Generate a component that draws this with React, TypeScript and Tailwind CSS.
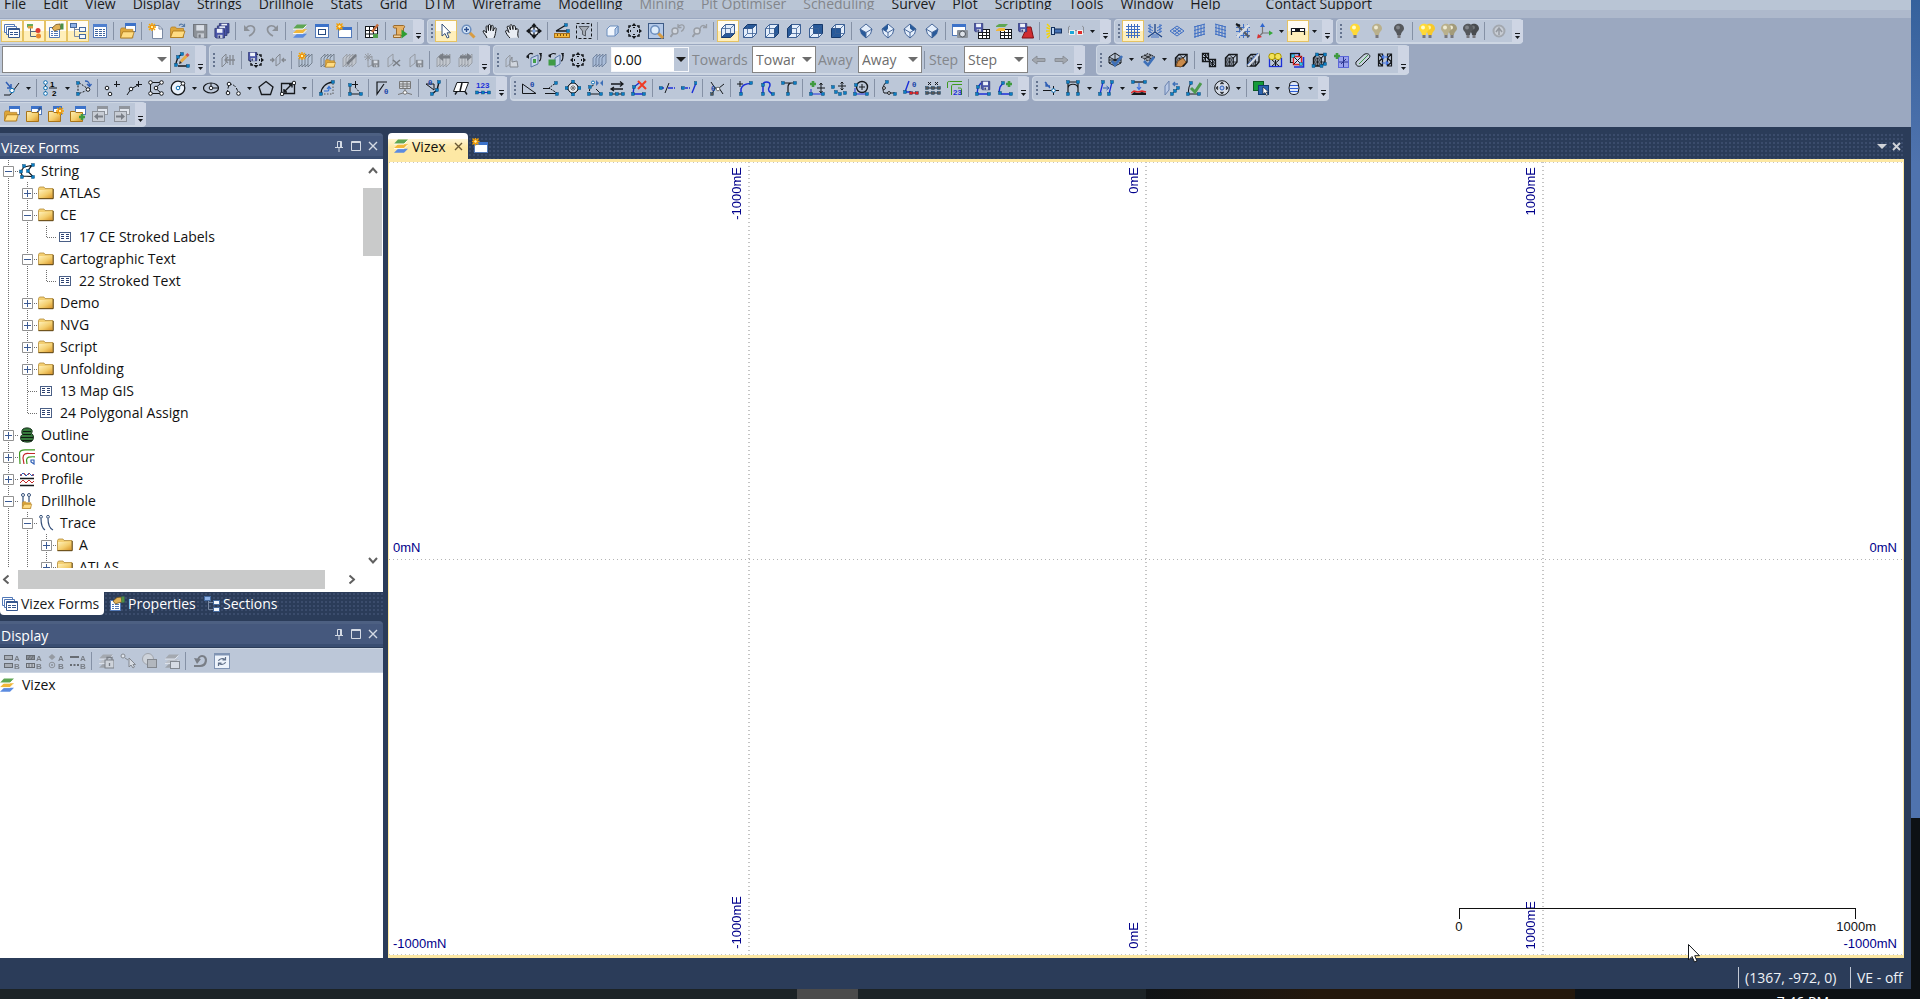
import React from 'react';
import clsx from 'clsx';

type PathProps = { d: string; c?: string; w?: number; f?: string; dash?: string };

const P = ({ d, c = '#15181c', w = 1, f = 'none', dash }: PathProps) => (
  <path d={d} stroke={c} strokeWidth={w} fill={f} strokeDasharray={dash} />
);

const F = ({ d, f = '#15181c' }: { d: string; f?: string }) => <path d={d} fill={f} />;

// small square string nodes, given as "x,y x,y" centres
const N = ({ p, f = '#0b7fc4' }: { p: string; f?: string }) => (
  <>
    {p.split(' ').map((pt) => {
      const [x, y] = pt.split(',').map(Number);
      return <rect key={pt} x={x - 1.5} y={y - 1.5} width="3" height="3" fill={f} stroke="#0b3f66" strokeWidth="0.4" />;
    })}
  </>
);

const Ring = ({ x, y, r = 1.8, c = '#15181c', f = '#fff' }: { x: number; y: number; r?: number; c?: string; f?: string }) => (
  <circle cx={x} cy={y} r={r} stroke={c} fill={f} />
);

const Sun = ({ x = 4, y = 4 }: { x?: number; y?: number }) => (
  <g transform={`translate(${x} ${y})`}>
    <P d="M0 -4V4M-4 0H4M-3 -3L3 3M3 -3L-3 3" c="#f5a300" w={1.4} />
    <circle r="1.8" fill="#fff3a0" stroke="#f08a00" />
  </g>
);

const Disk = ({ x = 0, y = 0, s = 1, c = '#4a55a8' }: { x?: number; y?: number; s?: number; c?: string }) => (
  <g transform={`translate(${x} ${y}) scale(${s})`}>
    <path d="M0.5 0.5H12.5V12.5H2L0.5 11Z" fill={c} stroke="#2c3570" />
    <rect x="3" y="1" width="7" height="5" fill="#eef2fb" />
    <rect x="4" y="8.5" width="6" height="4" fill="#c9cfdd" />
    <rect x="5" y="9.5" width="2" height="3" fill="#2c3570" />
  </g>
);

const Folder = ({ x = 0, y = 0, s = 1 }: { x?: number; y?: number; s?: number }) => (
  <g transform={`translate(${x} ${y}) scale(${s})`}>
    <path d="M0.5 2.5L1.5 1H5.5L6.5 2.5H13.5V11.5H0.5Z" fill="#dda63a" stroke="#b5812a" strokeWidth="0.8" />
    <path d="M0.5 11.5L3 5H15L12.8 11.5Z" fill="#ffdc83" stroke="#a87418" strokeWidth="0.8" />
  </g>
);

const ClosedFolder = () => (
  <path d="M0.5 5.5H5L6 6.5H12.5V15.5H0.5Z" fill="url(#folderFill)" stroke="#a87418" />
);

const Win = ({ x = 0, y = 0, w = 10, h = 9 }: { x?: number; y?: number; w?: number; h?: number }) => (
  <g>
    <rect x={x + 0.5} y={y + 0.5} width={w} height={h} fill="#fff" stroke="#5279b8" />
    <rect x={x} y={y} width={w + 1} height="3" fill="#3c72c9" />
  </g>
);

const Plus = ({ x, y, c = '#3f9a3f' }: { x: number; y: number; c?: string }) => (
  <P d={`M${x - 3} ${y}H${x + 3}M${x} ${y - 3}V${y + 3}`} c={c} w={2.6} />
);

const Pencil = () => (
  <>
    <P d="M7 9.5L13.5 3" c="#e7ab44" w={3} />
    <P d="M12.5 4L14.5 2" c="#c8525a" w={3} />
    <F d="M5 12L5.8 8.8L8 11Z" f="#3a2a18" />
  </>
);

const Layers = () => (
  <>
    <F d="M1 14.8L5 10.8H15L11 14.8Z" f="#5b8be0" />
    <F d="M1 10.3L5 6.3H15L11 10.3Z" f="#f2b73a" />
    <F d="M1 5.8L5 1.5H15L11 5.8Z" f="#5ea653" />
    <P d="M1 10.6H11L14.5 7M1 6.1H11L14.5 2.5" c="#fdfdf2" />
  </>
);

const cubeFaces = {
  bottom: 'M1.5 14.5L5.5 10.5H14.5L10.5 14.5Z',
  top: 'M1.5 5.5L5.5 1.5H14.5L10.5 5.5Z',
  right: 'M10.5 5.5L14.5 1.5V10.5L10.5 14.5Z',
  left: 'M1.5 5.5L5.5 1.5V10.5L1.5 14.5Z',
  back: 'M5.5 1.5H14.5V10.5H5.5Z',
  front: 'M1.5 5.5H10.5V14.5H1.5Z',
};

const Cube = ({ face }: { face: keyof typeof cubeFaces }) => (
  <>
    <path d="M1.5 5.5L5.5 1.5H14.5V10.5L10.5 14.5H1.5Z" fill="#e4eefb" stroke="#3b5f94" />
    <path d={cubeFaces[face]} fill="#285a9a" stroke="#16396b" />
    <P d="M1.5 5.5H10.5V14.5M10.5 5.5L14.5 1.5M1.5 14.5L5.5 10.5H14.5M5.5 10.5V1.5" c="#3b5f94" w={0.8} />
  </>
);

const Iso = ({ d }: { d: string }) => (
  <>
    <path d="M8 1L14 6L12.5 11L8 15L3.5 11L2 6Z" fill="#e4eefb" stroke="#48689a" />
    <path d={d} fill="#285a9a" />
    <P d="M2 6L8 9.5L14 6M8 9.5V15" c="#48689a" />
  </>
);

const Bulb = ({ x = 8, c, hi }: { x?: number; c: string; hi: string }) => (
  <>
    <path d={`M${x - 5} 5.5C${x - 5} -1 ${x + 5} -1 ${x + 5} 5.5C${x + 5} 8 ${x + 2} 9 ${x + 2} 12H${x - 2}C${x - 2} 9 ${x - 5} 8 ${x - 5} 5.5Z`} fill={c} />
    <circle cx={x - 1} cy="4.5" r="2" fill={hi} />
    <rect x={x - 1.5} y="12" width="3" height="3" fill="#77777c" />
  </>
);

const Fit = () => (
  <>
    <path d="M5 3H3V5M11 3H13V5M5 13H3V11M11 13H13V11" fill="none" stroke="#15181c" strokeWidth="1.5" />
    <F d="M8 0L10.5 3H5.5ZM8 16L10.5 13H5.5ZM0 8L3 5.5V10.5ZM16 8L13 5.5V10.5Z" />
    <P d="M7 4.5H9M7 11.5H9M4.5 7V9M11.5 7V9" />
  </>
);

const Slices = ({ c = '#6f7a88', f = '#b9c7d9' }: { c?: string; f?: string }) => (
  <>
    {[0, 3, 6, 9].map((x) => (
      <path key={x} d={`M${x + 1} 6L${x + 5} 2V11L${x + 1} 15Z`} fill={f} stroke={c} strokeWidth="0.9" />
    ))}
  </>
);

const Mesh = ({ c = '#15181c', f = 'none' }: { c?: string; f?: string }) => (
  <>
    <path d="M2.5 6L6 2.5H14V10L10.5 14H2.5Z" fill={f} stroke={c} strokeWidth="1.4" />
    <P d="M2.5 6H10.5V14M10.5 6L14 2.5M2.5 10L6.5 6L10.5 10L6.5 14ZM2.5 6L10.5 14M10.5 6L2.5 14M6.5 6V14M2.5 10H14M6 2.5L10 6L13 3" c={c} w={0.8} />
  </>
);

const Hatch = ({ d }: { d: string }) => <P d={d} c="#3f6fc4" w={1} />;

const Theta = ({ x, y }: { x: number; y: number }) => (
  <text x={x} y={y} fontSize="8" fontWeight="bold" fill="#2046a8" fontFamily="Liberation Sans">θ</text>
);

const AB = () => (
  <g fontSize="8" fontWeight="bold" fill="#3f444c" fontFamily="Liberation Sans">
    <text x="10" y="7.5">A</text>
    <text x="10" y="15.5">B</text>
  </g>
);

const Magnifier = ({ x = 0, y = 0 }: { x?: number; y?: number }) => (
  <g transform={`translate(${x} ${y})`}>
    <P d="M8.5 8.5L13.5 13.5" c="#d89c42" w={3} />
    <circle cx="5.5" cy="5.5" r="4.3" fill="#dcebfb" stroke="#6e8fbe" strokeWidth="1.6" />
  </g>
);

const icons: Record<string, React.ReactNode> = {
  forms: (
    <>
      <path d="M0.5 1.5H10.5V9.5H0.5Z" fill="#fff" stroke="#5279b8" />
      <path d="M2.5 3.5H12.5V11.5H2.5Z" fill="#fff" stroke="#5279b8" />
      <path d="M4.5 5.5H15.5V14.5H4.5Z" fill="#fff" stroke="#35578f" />
      <P d="M5 6.5H15M6 9.5H9M10 9.5H14M6 11.5H9M10 11.5H14" c="#35578f" />
    </>
  ),
  tree: (
    <>
      <P d="M4.5 5V13.5H10M4.5 8.5H10" c="#56667e" />
      <rect x="1" y="1" width="6" height="3.5" fill="#67a95a" />
      <rect x="2" y="3" width="5" height="2.5" fill="#dba13a" />
      <circle cx="12" cy="7.5" r="2.5" fill="#dd3b32" />
      <circle cx="12.5" cy="13" r="2.5" fill="#e9862b" />
    </>
  ),
  props: (
    <>
      <path d="M1.5 4.5H11.5V14.5H1.5Z" fill="#fff" stroke="#5279b8" />
      <P d="M3 8.5H5M6 8.5H10M3 10.5H5M6 10.5H10M3 12.5H5M6 12.5H10" c="#5279b8" />
      <path d="M4 5L8 1.5L12 1L13 6L9 7L6.5 8Z" fill="#e2b157" stroke="#6b5220" strokeWidth="0.8" />
      <rect x="12.5" y="0.5" width="3" height="6" fill="#4d8f46" />
    </>
  ),
  sections: (
    <>
      <P d="M4.5 4.5V13.5H9M4.5 6.5H9" c="#7b8aa3" />
      <rect x="0.5" y="0.5" width="6" height="4" fill="#8fb2e6" stroke="#456a9f" />
      <rect x="9.5" y="4.5" width="6" height="4" fill="#f3f7fd" stroke="#456a9f" />
      <rect x="9.5" y="11.5" width="6" height="4" fill="#f3f7fd" stroke="#456a9f" />
    </>
  ),
  table: (
    <>
      <rect x="1.5" y="1.5" width="13" height="13" fill="#fff" stroke="#5279b8" />
      <rect x="1" y="1" width="14" height="3" fill="#4f7fce" />
      <P d="M3 6.5H6M7 6.5H10M11 6.5H13M3 8.5H6M7 8.5H10M11 8.5H13M3 10.5H6M7 10.5H10M11 10.5H13M3 12.5H6M7 12.5H10M11 12.5H13" c="#40669e" />
    </>
  ),
  project: (<><Win x={5} y={0} w={10} h={8} /><Folder y={4} s={0.95} /></>),
  newFile: (<><path d="M4.5 2.5H11L14.5 6V15.5H4.5Z" fill="#fff" stroke="#7b8aa3" /><P d="M11 2.5V6H14.5" c="#7b8aa3" /><Sun /></>),
  open: (<><Folder y={3} /><P d="M9 2.5C11 0.5 13 1 14 3M14.5 0.8V3.5H11.5" c="#587ba8" w={1.2} /></>),
  save: <Disk x={1} y={1} s={1.1} c="#5f6670" />,
  saveAll: (<><Disk x={5} y={0} s={0.8} /><Disk x={3} y={2.5} s={0.8} /><Disk x={0.5} y={5} s={0.8} /></>),
  undo: (<><P d="M4 5C8 1 13 3 12.5 7C12 10 9 12 7 13" c="#60656e" w={1.6} /><F d="M2 2V8H8Z" f="#60656e" /></>),
  redo: (<><P d="M12 5C8 1 3 3 3.5 7C4 10 7 12 9 13" c="#60656e" w={1.6} /><F d="M14 2V8H8Z" f="#60656e" /></>),
  layers: <Layers />,
  window: (<><Win x={1} y={1} w={13} h={13} /><rect x="4.5" y="6.5" width="7" height="5" fill="#fff" stroke="#274a80" /></>),
  newWindow: (<><Win x={2} y={4} w={13} h={10} /><Sun x={3.5} y={3.5} /></>),
  editGrid: (
    <>
      <rect x="1.5" y="3.5" width="12" height="11" fill="#fff" stroke="#15181c" />
      <P d="M1.5 7.5H13.5M1.5 11H13.5M5.5 3.5V14.5M9.5 3.5V14.5" />
      <rect x="9" y="11" width="5" height="4" fill="#4fa04c" />
      <P d="M8 9L14 1.5" c="#c06a3a" w={2.4} />
    </>
  ),
  script: (
    <>
      <path d="M2 2.5H11.5C13 2.5 13 5 11.5 5V12.5H4.5V5H2C1 5 1 2.5 2 2.5Z" fill="#e7b266" stroke="#9b6a2c" />
      <path d="M1.5 12H9V14.5H1.5Z" fill="#f5d39d" stroke="#9b6a2c" />
      <F d="M9.5 6.5L15.5 11L9.5 15.5Z" f="#2e9e33" />
    </>
  ),
  cursor: <path d="M4 1V13L7 10.5L9.2 15L11 14.2L9 9.8H12.5Z" fill="#fff" stroke="#35507a" />,
  zoomIn: (<><Magnifier x={1} y={1} /><P d="M4 6.5H9M6.5 4V9" c="#2c4f8e" w={1.4} /></>),
  hand: (
    <path d="M5 15C4 12 1 10 1 8C2.5 7 3.5 8.5 4.5 10L4 3.5C5 2.5 6 3 6 4L6.5 7.5V2C7.5 1 8.5 1.5 8.5 2.5V7.5L9.5 2.5C10.5 2 11.3 2.5 11.2 3.5L11 8L12.5 5C13.5 4.5 14.5 5 14.2 6C13.5 9 13.5 12 12 15" fill="#e9edf4" stroke="#15181c" />
  ),
  grab: (
    <path d="M6 15C4 13 2 10.5 1.5 8C2.5 6.5 4 8 5 9.5L3 4C3.5 2.5 5 3 5.5 4.5L6.5 7L6 2.5C6.5 1 8 1.5 8.3 3L9 6.5V3C10 1.8 11 2.5 11.3 4L11.8 7L12.5 5.5C14 5.5 14.5 7 14 9C13.5 11.5 13.8 13 14.5 14.5" fill="#e9edf4" stroke="#15181c" />
  ),
  target: (
    <>
      <circle cx="8" cy="8" r="4.5" fill="#e9edf4" stroke="#15181c" strokeWidth="1.5" />
      <P d="M8 2V14M2 8H14" w={1.2} />
      <F d="M8 0L10.5 3H5.5ZM8 16L10.5 13H5.5ZM0 8L3 5.5V10.5ZM16 8L13 5.5V10.5Z" />
      <rect x="6.5" y="6.5" width="3" height="3" fill="#7fa5e0" />
    </>
  ),
  measure: (<><P d="M2 8L12 2M2 8H14" w={1.4} /><N p="12,2 14,8" /><rect x="0.5" y="10.5" width="15" height="4" fill="#f5b93a" stroke="#a8701a" /><P d="M3.5 11V13M6.5 11V13M9.5 11V13M12.5 11V13" c="#7d5210" /></>),
  filter: (<><P d="M0.5 0.5H15.5V15.5H0.5Z" dash="3 2" /><path d="M3 3.5H13L9.5 8V13L6.5 11.5V8Z" fill="#a6adb7" stroke="#555b64" /></>),
  cube: (<><path d="M3 6L6 3H14V10L11 13H3Z" fill="#f1f6fd" stroke="#6b8dbd" /><path d="M11 6L14 3V10L11 13Z" fill="#b6cdec" stroke="#6b8dbd" /></>),
  fit: <Fit />,
  zoomBox: (<><rect x="0.5" y="0.5" width="15" height="15" fill="#b4c9e8" stroke="#3e5b86" /><Magnifier x={1.5} y={1.5} /></>),
  zoomPrev: (<><circle cx="5" cy="8" r="3" fill="#dfe3ea" stroke="#777c84" strokeWidth="1.4" /><P d="M3 10.5L0.5 14" c="#777c84" w={2} /><P d="M8 4C10 0.5 15 1.5 14 5C13.5 7 12 8 11 8.5M8 1V4.5H11.5" c="#777c84" w={1.3} /></>),
  zoomNext: (<><circle cx="5" cy="8" r="3" fill="#dfe3ea" stroke="#777c84" strokeWidth="1.4" /><P d="M3 10.5L0.5 14" c="#777c84" w={2} /><P d="M8 8C7.5 3 11 1 14 4M14.5 1V4.5H11" c="#777c84" w={1.3} /></>),
  viewBottom: <Cube face="bottom" />,
  viewTop: <Cube face="top" />,
  viewRight: <Cube face="right" />,
  viewLeft: <Cube face="left" />,
  viewBack: <Cube face="back" />,
  viewFront: <Cube face="front" />,
  isoSW: <Iso d="M2 6L8 9.5V15L3.5 11Z" />,
  isoNW: <Iso d="M2 6L8 1V5.5L6 8.5Z" />,
  isoNE: <Iso d="M8 1L14 6L11 8L8 5.5Z" />,
  isoSE: <Iso d="M14 6L8 9.5V15L12.5 11Z" />,
  snapshot: (<><Win x={0} y={1} w={13} h={11} /><rect x="5" y="7" width="11" height="8" rx="1" fill="#8d949d" /><circle cx="10.5" cy="11" r="3" fill="#dde2e9" stroke="#4f555d" /></>),
  saveGrid: (<><rect x="4.5" y="6.5" width="11" height="9" fill="#fff" stroke="#15181c" /><P d="M4.5 9.5H15.5M4.5 12.5H15.5M8.5 6.5V15.5M12.5 6.5V15.5" /><Disk s={0.7} /></>),
  layerGrid: (<><rect x="4.5" y="6.5" width="11" height="9" fill="#fff" stroke="#15181c" /><P d="M4.5 9.5H15.5M4.5 12.5H15.5M8.5 6.5V15.5M12.5 6.5V15.5" /><F d="M0 3L3 1H12L9 4H0Z" f="#5ea653" /><F d="M0 7L3 5H9V8H0Z" f="#f2b73a" /></>),
  saveSolid: (<><path d="M4 15L9 4L13 4L15.5 15Z" fill="#d02c30" stroke="#7d1216" /><Disk s={0.7} /></>),
  torch: (<><rect x="5.5" y="4.5" width="3" height="7" fill="#b9d3f3" stroke="#14315f" /><rect x="8.5" y="6" width="7" height="4" fill="#4471b5" stroke="#14315f" /><P d="M4 4L1 1M4 8H0M4 12L1 15M4 6L0.5 4.5M4 10L0.5 11.5" c="#f5d400" w={1.4} /></>),
  glasses: (<><P d="M0.5 10V4L2 3M15.5 10V4L14 3M0 7.5H16" c="#8c9097" /><rect x="1.5" y="7.5" width="5" height="4" fill="#19a7d8" stroke="#eee" /><rect x="9.5" y="7.5" width="5" height="4" fill="#e02a2a" stroke="#eee" /></>),
  grid: <Hatch d="M1 3.5H15M1 6.5H15M1 9.5H15M1 12.5H15M3.5 1V15M6.5 1V15M9.5 1V15M12.5 1V15" />,
  grid3d: (<><P d="M8 1V9L1 14M8 9L15 14" c="#1d4384" w={1.3} /><Hatch d="M1 2L6 5M1 5L6 8M1 8L5 10M15 2L10 5M15 5L10 8M15 8L11 10M3 1V10M13 1V10M5 12H11M4 14H12" /></>),
  gridFlat: <Hatch d="M8 3L15 8L8 13L1 8ZM5.7 4.7L12.7 9.7M3.3 6.3L10.3 11.3M10.3 4.7L3.3 9.7M12.7 6.3L5.7 11.3" />,
  gridLeft: <Hatch d="M3 4L14 1M3 7.5L14 4.5M3 11L14 8M3 14L14 11M4 3V15M7 2V14M10 2V13M13 1V12" />,
  gridRight: <Hatch d="M2 1L13 4M2 4.5L13 7.5M2 8L13 11M2 11L13 14M3 1V12M6 2V13M9 2V14M12 3V15" />,
  gridTools: (<><Hatch d="M1 4.5H15M1 8.5H15M1 12.5H15M4.5 1V15M8.5 1V15M12.5 1V15" /><P d="M2 2L14 14" c="#555b64" w={2.2} /><P d="M14 2L2 14" c="#d8dde5" w={2.6} /><P d="M1 1L5 3" c="#15181c" w={2} /></>),
  axes: (<><P d="M5.5 10V2M5.5 10H14M5.5 10L1.5 14" c="#777" w={1.2} /><F d="M5.5 0L8 4H3Z" f="#2f66d0" /><F d="M16 10L12 7.5V12.5Z" f="#35a83a" /><F d="M0 15.5L1 11L5 14Z" f="#d83030" /></>),
  scale: (<><P d="M1.5 5V12M14.5 5V12" w={1.2} /><path d="M1.5 5.5H14.5V8.5H1.5Z" fill="#fff" stroke="#15181c" /><rect x="5" y="5" width="5" height="4" fill="#15181c" /></>),
  bulb: <Bulb c="#ffd936" hi="#fffbc4" />,
  bulbDim: <Bulb c="#b9b08c" hi="#eeead2" />,
  bulbOff: <Bulb c="#55585c" hi="#808388" />,
  bulbs: (<><Bulb x={11} c="#f7c92c" hi="#fff3a0" /><Bulb x={5} c="#ffd936" hi="#fffbc4" /></>),
  bulbsDim: (<><Bulb x={11} c="#a39b7a" hi="#eeead2" /><Bulb x={5} c="#b9b08c" hi="#eeead2" /></>),
  bulbsOff: (<><Bulb x={11} c="#484b4f" hi="#707377" /><Bulb x={5} c="#55585c" hi="#808388" /></>),
  reload: (<><circle cx="8" cy="8" r="5.5" fill="#cfd5de" stroke="#8a9099" strokeWidth="2" /><P d="M5 9L8 5L11 9M8 5V12" c="#6f757e" w={1.5} /></>),

  editString: (<><P d="M4 14H14M2 11L4 5L8 2M2 11V14" w={1.3} /><N p="2,13 14,14 4,5 8,2" /><Pencil /></>),
  planeLeft: (<><path d="M2 6L6 2V11L2 15Z" fill="none" stroke="#555" /><P d="M15 8H5M8 5L5 8L8 11M10 3V13M13 3V13" c="#555" w={1.3} /></>),
  fitSave: (<><Fit /><Disk s={0.7} /></>),
  planePair: (<><path d="M6 6L10 2V11L6 14Z" fill="none" stroke="#555" /><P d="M0 8H4M16 8H12M2 6L4 8L2 10M14 6L12 8L14 10" c="#555" w={1.3} /></>),
  slicesNew: (<><Slices /><Sun /></>),
  slicesOpen: (<><Slices /><Folder x={5} y={7} s={0.7} /></>),
  slicesEdit: (<><Slices /><P d="M5 12L14 3" c="#444" w={2.5} /></>),
  slicesSun: (<><P d="M4 1V9M0 5H8M1 2L7 8M7 2L1 8" c="#777" /><path d="M4 6L8 4V13L4 15Z" fill="none" stroke="#777" /><Disk x={8} y={8} s={0.55} c="#555" /></>),
  slicesDel: (<><path d="M2 6L7 2V11L2 15Z" fill="none" stroke="#777" /><P d="M7 8L14 14M14 8L7 14" c="#444" w={1.6} /></>),
  slicesDisk: (<><path d="M2 6L7 2V11L2 15Z" fill="none" stroke="#777" /><Disk x={8} y={8} s={0.55} c="#555" /></>),
  slicesPrev: (<><Slices c="#777" f="#c3cad4" /><F d="M2 5L7 1V3.5H14V6.5H7V9Z" f="#444" /></>),
  slicesNext: (<><Slices c="#777" f="#c3cad4" /><F d="M14 5L9 1V3.5H2V6.5H9V9Z" f="#444" /></>),
  pick: (<><path d="M2 7L6 3V12L2 15Z" fill="none" stroke="#777" /><path d="M6 15V9L8 5V10L13 9L14 15Z" fill="#dfe3ea" stroke="#555" /></>),
  rotPlane: (<><path d="M5 6L12 3V12L5 15Z" fill="#c5d4ec" stroke="#5a76a5" /><rect x="7" y="7" width="3" height="4" fill="#43a047" /><P d="M1 6C2 1 5 1 7 2M15 3C15 8 14 9 13 9" w={1.2} /><F d="M0 4L3 7V3ZM13 1L16 1L15 5Z" /></>),
  rotPlaneGreen: (<><path d="M7 6L12 3V12L7 15Z" fill="#c5d4ec" stroke="#5a76a5" /><rect x="0.5" y="7.5" width="7" height="6" fill="#3f9b45" /><P d="M1 5C3 1 5 1 8 2M15 3C15 8 14 9 13 9" w={1.2} /><F d="M0 3L3 6V2ZM13 1L16 1L15 5Z" /></>),
  slices: <Slices c="#6d7f9c" f="#a9bcd8" />,
  arrowLeft: <path d="M1 8L6 4V6.5H14V9.5H6V12Z" fill="#888e97" stroke="#5c626b" />,
  arrowRight: <path d="M15 8L10 4V6.5H2V9.5H10V12Z" fill="#888e97" stroke="#5c626b" />,

  wireCheck: (<><path d="M2 5L8 1L14 5V11L8 14L2 11Z" fill="none" stroke="#15181c" /><P d="M2 5L14 11M14 5L2 11M8 1V14M2 8H14" w={0.9} /><P d="M5 9L8 13L15 4" c="#3e70b8" w={2.6} /></>),
  surfCheck: (<><path d="M1 5L8 1.5L15 5L8 9Z" fill="#9aa0aa" stroke="#15181c" strokeDasharray="2 1" /><P d="M4.5 3L11.5 7M11.5 3L4.5 7" w={0.9} /><P d="M4 9L8 13L14 5" c="#3e70b8" w={2.6} /></>),
  wireBrush: (<><Mesh /><path d="M5 9L10 6L13 10L8 15L3 14Z" fill="#c98a4b" stroke="#7a4d20" /></>),
  meshSplit: (<><P d="M1.5 1.5H7.5V7.5H14.5V14.5H8.5V9.5H1.5Z" w={1.3} /><P d="M1.5 1.5L14.5 14.5M7.5 1.5L1.5 9.5M8.5 14.5L14.5 7.5M1.5 5.5H7.5M11.5 7.5V14.5M4.5 1.5V9.5M8 11H14" /></>),
  meshBox: <Mesh />,
  meshCut: (<><Mesh /><P d="M3 14L14 2" c="#d8dde8" w={2.2} /><P d="M2 13L13 1" c="#4a75c4" /></>),
  meshYellow: (<><rect x="2.5" y="6.5" width="12" height="8" fill="none" stroke="#1b2fd8" strokeWidth="1.3" /><P d="M5 8L12 14M12 8L5 14M8.5 8V14" /><circle cx="5" cy="4.5" r="3.2" fill="#f2e25a" stroke="#a89400" /><circle cx="11" cy="4.5" r="3.2" fill="#f2e25a" stroke="#a89400" /></>),
  meshRed: (<><path d="M1.5 1.5H10V4M14.5 5V15H5" fill="none" stroke="#1b2fd8" strokeWidth="1.6" /><P d="M1.5 1.5H10.5V10.5H1.5Z" w={1.2} /><path d="M4.5 4.5H12.5V12.5H4.5Z" fill="#cfdcf5" stroke="#e02424" strokeWidth="1.4" /><P d="M4.5 4.5L12.5 12.5M12.5 4.5L4.5 12.5" /><N p="4,4 12,12" f="#2cc3e8" /></>),
  meshNodes: (<><Mesh /><N p="2.5,14 10.5,14 14,2.5 14,12 6,2.5" /></>),
  meshAdd: (<><rect x="5.5" y="4.5" width="10" height="11" fill="#9aa2ee" stroke="#5b67d8" /><P d="M10.5 5V15M6 10H15M8 12L13 7" c="#2a3590" /><Plus x={4} y={4} /></>),
  tube: (<><path d="M1 10L9 2.5C12 0.5 16 2.5 14.5 5.5L6.5 13.5C3.5 15.5 0 13.5 1 10Z" fill="#c6d0dd" stroke="#15181c" /><P d="M4 12L13 3" c="#3f9a3f" /></>),
  meshSwap: (<><P d="M5.5 2V14H1.5V2ZM14.5 2V14H10.5V2ZM1.5 2L5.5 6L1.5 10L5.5 14M14.5 2L10.5 6L14.5 10L10.5 14" w={1.2} /><P d="M5 5H11M5 11H11M7 3L5 5L7 7M9 9L11 11L9 13" c="#3e70e0" w={1.2} /></>),

  snapLine: (<><P d="M0 15H6L15 3" /><P d="M2 2L7 8M3 8H7V4" c="#2f5fb5" w={1.5} /><Ring x={8} y={10.5} r={2.2} c="#0b6fb4" /></>),
  half: (<><P d="M2.5 2V14" dash="2 1" /><Ring x={2.5} y={2.5} c="#0b6fb4" /><Ring x={2.5} y={8} c="#0b6fb4" /><Ring x={2.5} y={13.5} c="#0b6fb4" /><P d="M6 8H14" /><g fontSize="8" fontWeight="bold" fontFamily="Liberation Sans"><text x="7" y="7">1</text><text x="9" y="15.5">2</text></g></>),
  closeTri: (<><P d="M2 2V14L13 9.5Z" dash="2 1.4" /><P d="M9 1C13 1 13.5 3 13.5 6M11 4L13.5 6.5L15.5 4" c="#2f5fb5" w={1.3} /><N p="2,3 2,14" /><Ring x={12} y={9.5} /></>),
  points: (<><Ring x={3} y={8} /><Ring x={6} y={14} /><P d="M12.5 1V7M10 4.5H16" /></>),
  lines: (<><P d="M1 15L5 9L12 5" /><Ring x={5} y={9} /><P d="M12.5 1V7M10 4.5H16" /></>),
  polygon: (<><P d="M2.5 2.5H13.5L7.5 8L13.5 13.5H2.5Z" /><Ring x={2.5} y={2.5} /><Ring x={13.5} y={2.5} /><Ring x={8} y={8} /><Ring x={13.5} y={13.5} /><Ring x={2.5} y={13.5} /></>),
  circle: (<><circle cx="8" cy="8" r="6.8" fill="#eaf1fa" stroke="#15181c" strokeWidth="1.3" /><P d="M8 8L13 3.5" /><Ring x={8} y={8} c="#0b6fb4" /><Ring x={13} y={3.5} /></>),
  ellipse: (<><ellipse cx="8" cy="8" rx="7.5" ry="5" fill="none" stroke="#15181c" strokeWidth="1.2" /><P d="M8 8V3M8 8H15" /><Ring x={8} y={8} /></>),
  arc: (<><P d="M2 13L4 4C9 4 12 7 13.5 14" dash="3 1.5" /><Ring x={4} y={4} /><Ring x={3} y={13} /><Ring x={13.5} y={13.5} /></>),
  pentagon: <P d="M8 1.5L15 7L12.5 14.5H3.5L1 7Z" w={1.3} />,
  rect: (<><P d="M1.5 3.5H14.5V13.5H1.5Z" w={1.3} /><P d="M4 12L12 4M4 9V12H7M9 4.5H12V7.5" w={1.4} /><Ring x={14} y={3} /><Ring x={2} y={14} /></>),
  arcNodes: (<><P d="M2 14C2 8 6 3 14 2" w={1.3} /><P d="M2 14H14V2" dash="1.5 1.5" c="#555" /><N p="2,14 14,2" /><P d="M5 11H9C10 11 10 9 10 7M8 9L10 6.5L12 9" c="#2f6fd5" w={1.2} /></>),
  insertPt: (<><P d="M3 5L3 14H14" /><P d="M8 7L14 14" dash="2 1.5" /><P d="M8.5 1V7M5 4.5H11" /><N p="3,5 3,14 14,14" /></>),
  angleDown: (<><P d="M12 2H2V14L9 4" w={1.2} /><Theta x={9} y={14} /></>),
  tableNode: (<><path d="M2.5 1.5H13.5V8.5H2.5Z" fill="#d7dbe1" stroke="#777" /><P d="M2.5 4H13.5M2.5 6.2H13.5M6 1.5V8.5M10 1.5V8.5M8 8.5V12M1 14.5L6 13M15 14.5L10 13" c="#777" /><Ring x={8} y={12.5} c="#777" /></>),
  bearing: (<><P d="M1 4L9 10V4Z" /><P d="M14 2L12 10L7 14" w={1.4} /><N p="14,2 12,10 7,14" /><Theta x={3} y={5} /></>),
  plane: (<><path d="M4 2.5H15.5L12 11.5H0.5Z" fill="#fff" stroke="#15181c" /><P d="M2 14.5L4 11.5M12 11.5L14 14.5M9 3L7 11" w={1.5} /></>),
  numbers: (<><text x="1" y="8" fontSize="8" fontWeight="bold" fill="#1b2fd8" fontFamily="Liberation Sans">123</text><P d="M1 12.5H15" c="#1b2fd8" /><N p="2,12.5 8,12.5 14,12.5" /></>),

  slope: (<><P d="M1.5 4V13.5H15Z" /><Theta x={9} y={7} /></>),
  cornerPt: (<><P d="M0 8.5H7M13 13.5H2" w={1.2} /><P d="M14 2L6 8L14 13" dash="2 1" /><N p="14,14 13,3" /></>),
  diamond: (<><circle cx="8" cy="8" r="5" fill="#e7eaf0" stroke="#15181c" /><P d="M8 1L15 8L8 15L1 8Z" dash="2 1" /><P d="M5 8H11M8 5V11M6 6L10 10M10 6L6 10" c="#777" /><N p="8,1.5 14.5,8 8,14.5 1.5,8" /></>),
  mirror: (<><P d="M2 14L3 7L7 5" dash="2 1" /><P d="M2 14H14L9 9" /><N p="2,14 14,14 3,7" /><Ring x={6} y={2.5} c="#0b6fb4" r={1.5} /><F d="M9 0L12 3L9 6ZM16 0L13 3L16 6Z" f="#3e70b8" /></>),
  reverse: (<><P d="M2 4H14M11 1.5L14 4L11 6.5M14 9H2M5 7L2 9L5 11" w={1.3} /><P d="M1 14H15" /><N p="2,14 8,14 14,14" /></>),
  deleteString: (<><P d="M2 14L3 7L8 3M2 14H13" c="#1b2fd8" w={1.4} /><N p="2,14 13,14 3,7" /><P d="M7 1L15 9M15 1L7 9" c="#ef3b24" w={2} /></>),
  breakLine: (<><P d="M0 8H6M9 8H16" c="#1b2fd8" w={1.5} dash="5 1" /><P d="M6 13L10 3" /><N p="2,8" /></>),
  extendLine: (<><P d="M0 8H9" c="#1b2fd8" w={1.5} dash="3 1" /><P d="M11 13L15 3" c="#1b2fd8" w={1.4} /><N p="2,8 15,3" /></>),
  fork: (<><P d="M2 2L6 8L3 14M6 8H10L15 4M10 8L14 14" /><Ring x={9} y={9} c="#777" /><N p="3,14" f="#555" /><Theta x={2} y={11} /></>),
  fillet: (<><P d="M4 15V9C5 5 8 3.5 14 3.5" c="#1b2fd8" w={1.5} /><P d="M3 1V7M0 4H6" /><N p="4,14 14,3" /></>),
  loop: (<><P d="M4 14V5C4 1 11 1 11 5C11 8 8 8 10 11L14 15" c="#1b2fd8" w={1.5} /><N p="4,5 4,14 14,14" /></>),
  tee: (<><P d="M1 3H14M7 15V7C7 5 8 3 11 3" w={1.2} /><N p="2,3 14,3 7,14" /></>),
  addMove: (<><Plus x={4} y={4} /><P d="M12 3V13M8 8H16M10.5 5L12 3L13.5 5M10.5 11L12 13L13.5 11" /><P d="M2 9V14H14" c="#1b2fd8" /><N p="2,14 14,14" /></>),
  movePts: (<><P d="M11 2V10M7 6H15M9.5 3.5L11 2L12.5 3.5M9.5 8.5L11 10L12.5 8.5" /><N p="2,7 5,12 9,14 14,13" /></>),
  rotate: (<><circle cx="9" cy="7" r="5.5" fill="none" stroke="#15181c" strokeWidth="1.4" /><P d="M9 4V10M6 7H12" /><P d="M2 8V14H14" c="#1b2fd8" /><N p="2,14 14,14 3,5" /></>),
  curvePts: (<><P d="M6 2C2 4 1 9 3 13H14" /><N p="6,2 14,14" /><Ring x={3} y={8} r={1.4} /><Ring x={8} y={13} r={1.4} /></>),
  angleRed: (<><P d="M6 1L2 12H8" c="#1b2fd8" w={1.4} /><P d="M8 13H15" c="#d22" w={1.6} /><N p="2,12" /><N p="8,13 14,13" f="#d22" /><Theta x={9} y={7} /></>),
  chainX: (<><P d="M1 8H15M1 13H15" /><P d="M3 2L6 5M6 2L3 5M10 2L13 5M13 2L10 5" /><N p="2,8 8,8 14,8 2,13 8,13 14,13" f="#555" /></>),
  contours: (<><P d="M0.5 8V3C0.5 1 2 1.5 4 1.5H15M4.5 15V7C4.5 4.5 5 4.5 7 4.5H15M14.5 15V9C14.5 8 13 8 11 8" c="#3f9a20" /><text x="6" y="15" fontSize="8" fontWeight="bold" fill="#1b2fd8" fontFamily="Liberation Sans">23</text></>),
  saveString: (<><P d="M2 14H14M2 14L3 7L6 3" c="#1b2fd8" w={1.4} /><N p="2,14 14,14 3,7" /><Disk x={6} y={1} s={0.7} /></>),
  addString: (<><P d="M4 14H14M2 12L3 7L6 3" c="#1b2fd8" w={1.4} /><N p="3,13 14,14 6,3" /><Plus x={12} y={4} /></>),

  snapPt: (<><P d="M0 10.5H16M10.5 6V15" /><P d="M2 2L7 8M3 2V6H7" c="#2f5fb5" w={1.3} /><Ring x={10.5} y={10.5} c="#0b6fb4" /></>),
  bridge: (<><P d="M3 14V2M13 14V2M3 8C4 3 12 3 13 8M3 2H13" w={1.2} /><N p="3,2 13,2 3,14 13,14" /></>),
  between: (<><P d="M2 14L5 2M11 14L14 2" c="#1b2fd8" w={1.3} /><P d="M5 8H11M8.5 6L11 8L8.5 10" c="#2f5fb5" /><N p="2,14 5,2 11,14 14,2" /></>),
  drape: (<><P d="M1 2H15" w={1.3} /><N p="2,2 14,2" /><P d="M8 3V9M6 7L8 9.5L10 7" c="#3e70e0" w={1.2} /><F d="M0 15L3 12L7 13L11 12L15 13V15Z" /><P d="M0 13L3 11L7 12L11 11L15 12" c="#e02424" w={1.4} /></>),
  planeNodes: (<><path d="M1 6L5 1V10L1 15Z" fill="#b9c9e6" stroke="#6a83b0" /><P d="M9 4H14M11 2L9 4L11 6" c="#3e70b8" w={1.3} /><P d="M8 14L14 8" dash="2 1" /><N p="8,14 11,11 14,8" /></>),
  stringTick: (<><P d="M2 14H13M2 14L3 7L5 3" /><P d="M5 8L9 12L15 3" c="#4d9a4d" w={3} /><N p="2,14 13,14 5,3" /></>),
  wheel: (<><circle cx="8" cy="8" r="7.3" fill="#d3dae5" stroke="#15181c" /><circle cx="8" cy="8" r="2" fill="#b9c9f3" stroke="#2f5fb5" /><P d="M6.5 4L8 2.5L9.5 4M6.5 12L8 13.5L9.5 12M4 6.5L2.5 8L4 9.5M12 6.5L13.5 8L12 9.5" w={1.2} /></>),
  select: (<><rect x="0.5" y="1.5" width="10" height="9" fill="#149a3a" stroke="#0b5c22" /><rect x="5.5" y="5.5" width="10" height="9" fill="#2b63b0" stroke="#123a70" /><path d="M10 7V14L12 12.5L13.5 15.5L14.8 14.8L13.4 12H15.5Z" fill="#fff" stroke="#15181c" strokeWidth="0.6" /></>),
  drum: (<><path d="M4 3C6 1 10 1 12 3L13 8L12 13C10 15 6 15 4 13L3 8Z" fill="#dfe9fb" stroke="#15181c" /><P d="M4 5.5H12M3.5 8.5H12.5M4 11.5H12" c="#2f5fd5" w={1.2} /></>),

  projOpen: (<><Win x={5} y={0} w={10} h={8} /><Folder y={4} s={0.95} /></>),
  projClose: (<><Win x={5} y={0} w={10} h={8} /><ClosedFolder /><P d="M11 6C13 5 14 4 14 2M12 3.5L14 1.5L15.5 3.5" c="#35578f" w={1.3} /></>),
  projNew: (<><Win x={5} y={0} w={8} h={8} /><ClosedFolder /><Sun x={12} y={5} /></>),
  projAdd: (<><Win x={5} y={0} w={10} h={8} /><ClosedFolder /><Plus x={12} y={11} /></>),
  projPrev: (<><Win x={5} y={0} w={10} h={8} /><rect x="0.5" y="5.5" width="12" height="10" fill="#cfd3da" stroke="#666" /><F d="M2 10.5L6 7V9.5H11V11.5H6V14Z" f="#444" /></>),
  projNext: (<><Win x={5} y={0} w={10} h={8} /><rect x="0.5" y="5.5" width="12" height="10" fill="#cfd3da" stroke="#666" /><F d="M11 10.5L7 7V9.5H2V11.5H7V14Z" f="#444" /></>),

  fillAB: (<><rect x="0.5" y="2.5" width="8" height="4" fill="#999" stroke="#222" /><rect x="0.5" y="10.5" width="8" height="4" fill="#999" stroke="#222" /><AB /></>),
  hatchAB: (<><rect x="0.5" y="2.5" width="8" height="4" fill="#666" stroke="#222" /><rect x="0.5" y="10.5" width="8" height="4" fill="#bbb" stroke="#222" /><P d="M3 10V14.5M6 10V14.5M2 6L5 2M5 6L8 2" c="#222" /><AB /></>),
  symbolAB: (<><path d="M4 1L7.5 4L4 7L0.5 4Z" fill="#777" /><circle cx="4" cy="12" r="2.8" fill="none" stroke="#666" /><circle cx="4" cy="12" r="1" fill="#666" /><AB /></>),
  lineAB: (<><P d="M0 4H9" w={2} c="#222" /><P d="M0 12H9" w={2} c="#222" dash="2 1.5" /><AB /></>),
  lockLayers: (<><Layers /><rect x="7" y="7" width="9" height="8" fill="#ddd" stroke="#444" /><P d="M9 7V4.5H14V7M11.5 10V13" c="#444" w={1.3} /></>),
  nodePick: (<><Ring x={3} y={3} r={2} c="#555" /><P d="M5 5L8 7" c="#555" /><path d="M9 5V14L11 12L13 15L14.5 14L13 11.5H15.5Z" fill="#eee" stroke="#555" /></>),
  shapes: (<><circle cx="6" cy="6" r="5.5" fill="#ddd" stroke="#888" /><rect x="5.5" y="6.5" width="9" height="8" fill="#aaa" stroke="#555" /></>),
  layerWin: (<><Layers /><rect x="6.5" y="8.5" width="9" height="7" fill="#eee" stroke="#555" /></>),
  revert: (<><P d="M2 13H8C15 13 16 3 10 3C8 3 6 5 6 8" c="#444" w={2.2} /><F d="M2 5L9 6L5 11Z" f="#444" /></>),
  refresh: (<><rect x="0.5" y="0.5" width="15" height="15" fill="#edf3fb" stroke="#8094b3" /><rect x="0.5" y="0.5" width="15" height="2" fill="#8094b3" /><P d="M4.5 8C5 5.5 9 5 11 6.5M11.5 4V7H8.5M11.5 9C11 11.5 7 12 5 10.5M4.5 13V10H7.5" c="#5f6f88" w={1.2} /></>),

  // tree nodes
  folder: (<><path d="M0.5 3.5L1.5 2H6L7 3.5H15V13.5H0.5Z" fill="#f3cf72" stroke="#b48d3c" strokeWidth="0.8" /><path d="M1 5H14.5V13H1Z" fill="url(#folderFill)" /><P d="M0.5 13.7H15.2V4" c="#5e4310" /></>),
  form: (<><rect x="2.5" y="3.5" width="11" height="9" fill="#fff" stroke="#4a5f86" /><P d="M4 5.5H7M9 5.5H12M4 7.5H7M9 7.5H12M4 9.5H7M9 9.5H12" c="#2b4170" /></>),
  string: (<><P d="M3 14V12L1.5 9L5 4L13 2.5L8.5 8L14 13.5L3 13" w={1.2} /><N p="2,8.5 5,3 14,2 9,8 14,14 3,14" /></>),
  outline: (<><path d="M4 2C6 0.5 10 0.5 12 2C14 4 13 5 12.5 6.5C15 8 15 12 13 14C11 15.5 6 15.5 3 14C0.5 12 1.5 8.5 3.5 7.5C2.5 5.5 2.5 3.5 4 2Z" fill="#35793b" stroke="#132d17" /><P d="M4 4.5H12M4 7.5H12M2 10.5H14M3 13.5H13" c="#101a12" w={1.2} /></>),
  contour: (<><P d="M1 15L0.5 4C1 1 3 0.8 6 0.8H16" c="#3f9a20" w={1.2} /><P d="M5 15L4 9C4 5 7 4 10 4.5H16" c="#c22828" w={1.2} /><P d="M8 15L7.5 11C8 8 10 7.5 16 7.8" c="#3f9a20" w={1.2} /><P d="M12 11H15V15L12 13Z" c="#2f5fb5" w={1.2} /></>),
  profile: (<><P d="M1 5L4 2L7 5L10 2L13 5L15 3" c="#2f5fb5" /><P d="M1 3L3 5M5 2L7 4M9 4L11 2M13 3L15 5" c="#c22828" w={0.8} /><P d="M1 7.5H15M1 14.5H15" w={1.3} /><P d="M1 12L4 9L7 12L10 9L13 12L15 10" c="#c22828" /></>),
  drillhole: (<><circle cx="4" cy="2" r="1.5" fill="none" stroke="#35507a" /><circle cx="10" cy="2" r="1.5" fill="none" stroke="#35507a" /><P d="M4 4V13M10 4V9" c="#35507a" w={1.2} /><Folder x={3} y={8} s={0.65} /></>),
  trace: (<><circle cx="3" cy="1.8" r="1.4" fill="none" stroke="#35507a" /><circle cx="10" cy="1.8" r="1.4" fill="none" stroke="#35507a" /><P d="M3 3.5C3 9 4 13 7 15M10 3.5C10 9 11 13 15 15" c="#35507a" w={1.2} /></>),
};

const Icon = ({ name, className }: { name: string; className?: string }) => (
  <svg viewBox="0 0 16 16" className={clsx('h-4 w-4 shrink-0', className)} aria-hidden="true">
    {icons[name]}
  </svg>
);

// Toolbar items: "|" separator, ">" split-button arrow, "*" pressed, "~" disabled
const ToolItems = ({ items }: { items: string }) => (
  <>
    {items.split(' ').map((item, i) => {
      if (item === '|') {
        return <div key={i} className="mx-[2px] h-[18px] w-[2px] border-l border-[#8591a5]" />;
      }
      if (item === '>') {
        return (
          <button key={i} aria-label="More options" className="flex h-[22px] w-[11px] items-center justify-center">
            <svg viewBox="0 0 5 3" className="h-[3px] w-[5px]"><F d="M0 0H5L2.5 3Z" /></svg>
          </button>
        );
      }
      const active = item[0] === '*';
      const disabled = item[0] === '~';
      const name = active || disabled ? item.slice(1) : item;
      return (
        <button
          key={i}
          aria-label={name}
          disabled={disabled}
          className={clsx(
            'flex h-[22px] w-[22px] shrink-0 items-center justify-center',
            active && 'border border-[#e5c365] bg-linear-to-b from-[#fffcf4] from-50% to-[#ffefbb] to-50%',
          )}
        >
          <Icon name={name} className={disabled ? 'opacity-55 grayscale' : ''} />
        </button>
      );
    })}
  </>
);

const Grip = () => (
  <div className="flex w-[7px] flex-col items-center gap-[2px]">
    {[0, 1, 2, 3].map((n) => <span key={n} className="h-[2px] w-[2px] bg-[#65748f]" />)}
  </div>
);

const ToolStrip = ({ grip = true, tall, className, children }: { grip?: boolean; tall?: boolean; className?: string; children: React.ReactNode }) => (
  <div
    role="toolbar"
    className={clsx(
      'flex shrink-0 items-center rounded-r-sm border-t border-b-2 border-[#cdd6e3] bg-[#bcc7d8]',
      tall ? 'h-[30px]' : 'h-[25px]',
      grip && 'rounded-l-sm border-l',
      !grip && 'pl-px',
      className,
    )}
  >
    {grip && <Grip />}
    {children}
    <button aria-label="Toolbar options" className="ml-[2px] flex w-[11px] items-end justify-center self-stretch bg-[#ced5e4] pb-[2px]">
      <svg viewBox="0 0 7 7" className="h-[7px] w-[7px]"><P d="M1 0.5H6" /><F d="M1 3H6L3.5 6Z" /></svg>
    </button>
  </div>
);

const DropArrow = ({ className }: { className?: string }) => (
  <svg viewBox="0 0 10 5" className={clsx('h-[5px] w-[10px]', className)}><path d="M0 0H10L5 5Z" fill="currentColor" /></svg>
);

const Combo = ({ label, value, className }: { label: string; value: string; className?: string }) => (
  <div className={clsx('relative h-[27px] border border-[#848484] bg-white text-[#6d6d6d]', className)}>
    <select aria-label={label} defaultValue={value} className="h-full w-full appearance-none bg-transparent pr-5 pl-[3px] outline-none">
      <option>{value}</option>
    </select>
    <DropArrow className="pointer-events-none absolute top-[10px] right-[3px]" />
  </div>
);

const menu: [string, boolean?][] = [
  ['File'], ['Edit'], ['View'], ['Display'], ['Strings'], ['Drillhole'], ['Stats'], ['Grid'], ['DTM'],
  ['Wireframe'], ['Modelling'], ['Mining', true], ['Pit Optimiser', true], ['Scheduling', true],
  ['Survey'], ['Plot'], ['Scripting'], ['Tools'], ['Window'], ['Help'],
];

const MenuBar = () => (
  <header className="h-[18px] shrink-0 overflow-hidden border-b-8 border-[#aeb9cc] bg-[#b9c5d5]">
    <nav className="-mt-[7px] flex h-[22px] items-center gap-[17px] pl-1 text-[#1b1b1b]">
      {menu.map(([label, disabled]) => (
        <button key={label} disabled={disabled} className="whitespace-nowrap disabled:text-[#83868b]">{label}</button>
      ))}
      <button className="ml-7 whitespace-nowrap">Contact Support</button>
    </nav>
  </header>
);

const Toolbars = () => (
  <div className="flex shrink-0 flex-col gap-px bg-[#9ba8c0] pt-px">
    <div className="flex gap-[3px]">
      <ToolStrip grip={false}>
        <ToolItems items="*forms *tree *props *sections table | project | newFile open ~save saveAll | ~undo ~redo | layers window newWindow | editGrid | script" />
      </ToolStrip>
      <ToolStrip>
        <ToolItems items="*cursor zoomIn hand grab target | measure filter | cube fit zoomBox ~zoomPrev ~zoomNext | *viewBottom viewTop viewRight viewLeft viewBack viewFront | isoSW isoNW isoNE isoSE | snapshot saveGrid layerGrid saveSolid | torch glasses >" />
      </ToolStrip>
      <ToolStrip>
        <ToolItems items="*grid grid3d gridFlat gridLeft gridRight gridTools axes > *scale >" />
      </ToolStrip>
      <ToolStrip>
        <ToolItems items="bulb bulbDim bulbOff | bulbs bulbsDim bulbsOff | ~reload" />
      </ToolStrip>
    </div>
    <div className="flex gap-[3px]">
      <ToolStrip tall grip={false}>
        <Combo label="Active string" value="" className="ml-px w-[169px]" />
        <ToolItems items="editString" />
      </ToolStrip>
      <ToolStrip tall>
        <ToolItems items="~planeLeft | fitSave ~planePair | slicesNew slicesOpen ~slicesEdit ~slicesSun ~slicesDel ~slicesDisk | ~slicesPrev ~slicesNext" />
      </ToolStrip>
      <ToolStrip tall>
        <ToolItems items="~pick rotPlane rotPlaneGreen fit slices" />
        <div className="flex h-[25px] w-[78px] border border-[#f4f6fa] bg-white">
          <input aria-label="Section distance" defaultValue="0.00" className="w-[62px] min-w-0 pl-[2px] text-[#111] outline-none" />
          <button aria-label="Distances" className="flex flex-1 items-center justify-center bg-[#bcc7d8] text-[#1b1b1b]"><DropArrow className="w-[9px]" /></button>
        </div>
        <label className="flex items-center text-[#83868b]">
          <span className="w-[63px] pl-[3px]">Towards</span>
          <Combo label="Towards" value="Towards" className="w-[64px]" />
        </label>
        <label className="flex items-center text-[#83868b]">
          <span className="w-[42px] pl-[2px]">Away</span>
          <Combo label="Away" value="Away" className="w-[64px]" />
        </label>
        <ToolItems items="|" />
        <label className="flex items-center text-[#83868b]">
          <span className="w-[36px] pl-px">Step</span>
          <Combo label="Step" value="Step" className="w-[64px]" />
        </label>
        <ToolItems items="~arrowLeft ~arrowRight" />
      </ToolStrip>
      <ToolStrip tall className="ml-2">
        <ToolItems items="wireCheck > surfCheck > wireBrush | meshSplit meshBox meshCut meshYellow meshRed meshNodes meshAdd tube meshSwap" />
      </ToolStrip>
    </div>
    <div className="flex gap-[3px]">
      <ToolStrip grip={false}>
        <ToolItems items="snapLine > | half > closeTri | points lines polygon circle > ellipse arc > pentagon rect > | arcNodes | insertPt | angleDown tableNode | bearing | plane numbers" />
      </ToolStrip>
      <ToolStrip>
        <ToolItems items="slope cornerPt diamond mirror reverse deleteString | breakLine extendLine | fork | fillet loop tee | addMove movePts rotate | curvePts angleRed chainX contours | saveString addString" />
      </ToolStrip>
      <ToolStrip>
        <ToolItems items="snapPt bridge > between > drape > planeNodes stringTick | wheel > | select > drum >" />
      </ToolStrip>
    </div>
    <div className="flex">
      <ToolStrip grip={false}>
        <ToolItems items="projOpen projClose projNew projAdd ~projPrev ~projNext" />
      </ToolStrip>
    </div>
  </div>
);

const PanelHeader = ({ title }: { title: string }) => (
  <div className="flex h-[26px] shrink-0 items-center rounded-tr-sm border-t-[3px] border-b-[3px] border-t-[#4d6082] border-b-[#394d71] bg-[#45587d] pl-px text-white">
    <h2 className="flex-1 pt-1">{title}</h2>
    <div className="flex items-center gap-[7px] pr-[5px]">
      <button aria-label="Pin"><svg viewBox="0 0 10 12" className="h-3 w-[10px]"><P d="M3.5 7V1.5H7.5V7M6.5 1V7M1 7.5H9M5 8V12" c="#d4dae4" /></svg></button>
      <button aria-label="Maximise"><svg viewBox="0 0 10 10" className="h-[10px] w-[10px]"><P d="M0.5 0.5H9.5V9.5H0.5ZM0.5 1.5H9.5" c="#d4dae4" /></svg></button>
      <button aria-label="Close"><svg viewBox="0 0 10 10" className="h-[10px] w-[10px]"><P d="M1 1L9 9M9 1L1 9" c="#d4dae4" w={1.4} /></svg></button>
    </div>
  </div>
);

type TreeRow = { label: string; icon: string; depth: number; state?: 'open' | 'closed'; last?: boolean };

const treeRows: TreeRow[] = [
  { label: 'String', icon: 'string', depth: 0, state: 'open' },
  { label: 'ATLAS', icon: 'folder', depth: 1, state: 'closed' },
  { label: 'CE', icon: 'folder', depth: 1, state: 'open' },
  { label: '17 CE Stroked Labels', icon: 'form', depth: 2, last: true },
  { label: 'Cartographic Text', icon: 'folder', depth: 1, state: 'open' },
  { label: '22 Stroked Text', icon: 'form', depth: 2, last: true },
  { label: 'Demo', icon: 'folder', depth: 1, state: 'closed' },
  { label: 'NVG', icon: 'folder', depth: 1, state: 'closed' },
  { label: 'Script', icon: 'folder', depth: 1, state: 'closed' },
  { label: 'Unfolding', icon: 'folder', depth: 1, state: 'closed' },
  { label: '13 Map GIS', icon: 'form', depth: 1 },
  { label: '24 Polygonal Assign', icon: 'form', depth: 1, last: true },
  { label: 'Outline', icon: 'outline', depth: 0, state: 'closed' },
  { label: 'Contour', icon: 'contour', depth: 0, state: 'closed' },
  { label: 'Profile', icon: 'profile', depth: 0, state: 'closed' },
  { label: 'Drillhole', icon: 'drillhole', depth: 0, state: 'open' },
  { label: 'Trace', icon: 'trace', depth: 1, state: 'open' },
  { label: 'A', icon: 'folder', depth: 2, state: 'closed' },
  { label: 'ATLAS', icon: 'folder', depth: 2, state: 'closed' },
];

const TreeItem = ({ row }: { row: TreeRow }) => (
  <li className="flex h-[22px] shrink-0 items-center">
    {Array.from({ length: row.depth }, (_, i) => (
      <svg key={i} viewBox="0 0 19 22" className="h-[22px] w-[19px] shrink-0"><P d="M9.5 0V22" c="#6e6e6e" dash="1 1" /></svg>
    ))}
    <button aria-label={`Toggle ${row.label}`} tabIndex={row.state ? 0 : -1} className="h-[22px] w-[19px] shrink-0">
      <svg viewBox="0 0 19 22" className="h-[22px] w-[19px]">
        <P d={row.last ? 'M9.5 0V11' : 'M9.5 0V22'} c="#6e6e6e" dash="1 1" />
        <P d="M10 11.5H19" c="#6e6e6e" dash="1 1" />
        {row.state && <path d="M4.5 6.5H14.5V16.5H4.5Z" fill="#fff" stroke="#919191" />}
        {row.state && <P d={row.state === 'closed' ? 'M6 11.5H13M9.5 8V15' : 'M6 11.5H13'} c="#3a5a94" />}
      </svg>
    </button>
    <Icon name={row.icon} className="mx-[1px]" />
    <span className="pl-[5px] whitespace-nowrap">{row.label}</span>
  </li>
);

const Chevron = ({ className }: { className?: string }) => (
  <svg viewBox="0 0 10 7" className={clsx('h-[7px] w-[10px]', className)}><P d="M1 6L5 1.5L9 6" c="#606060" w={2} /></svg>
);

const dots = 'bg-[#2b3c59] bg-[radial-gradient(#3b4c6c_1px,transparent_1px)] bg-[size:4px_4px]';

const FormsPanel = () => (
  <section className="flex min-h-0 flex-[482_1_0%] flex-col">
    <PanelHeader title="Vizex Forms" />
    <div className="flex min-h-0 flex-1 bg-white">
      <ul className="-ml-px flex flex-1 flex-col overflow-hidden pt-px text-[#111]">
        {treeRows.map((row, i) => <TreeItem key={i} row={row} />)}
      </ul>
      <div className="flex w-[20px] flex-col items-center pt-2 pr-px pb-1">
        <button aria-label="Scroll up"><Chevron /></button>
        <div className="w-full flex-1 pt-[14px]"><div className="h-[68px] w-full bg-[#c9caca]" /></div>
        <button aria-label="Scroll down"><Chevron className="rotate-180" /></button>
      </div>
    </div>
    <div className="flex h-[24px] shrink-0 items-start bg-white pt-[2px]">
      <button aria-label="Scroll left" className="h-[19px] w-[18px] shrink-0 pl-px"><Chevron className="-rotate-90" /></button>
      <div className="h-[19px] w-[307px] bg-[#c9caca]" />
      <button aria-label="Scroll right" className="ml-[22px] h-[19px]"><Chevron className="rotate-90" /></button>
    </div>
    <div className={clsx('flex h-[23px] shrink-0 items-center text-white', dots)}>
      <button className="flex h-full w-[104px] items-center gap-[3px] rounded-b-sm bg-white pl-[2px] whitespace-nowrap text-[#1b1b1b]">
        <Icon name="forms" />Vizex Forms
      </button>
      <button className="flex w-[96px] items-center gap-[3px] pl-[5px] whitespace-nowrap"><Icon name="props" />Properties</button>
      <button className="flex items-center gap-[3px] pl-1 whitespace-nowrap"><Icon name="sections" />Sections</button>
    </div>
  </section>
);

const DisplayPanel = () => (
  <section className="flex min-h-0 flex-[337_1_0%] flex-col">
    <PanelHeader title="Display" />
    <div role="toolbar" className="mt-px flex h-[25px] shrink-0 items-center border-y border-[#cdd6e3] bg-[#bcc7d8] pl-px">
      <ToolItems items="~fillAB ~hatchAB ~symbolAB ~lineAB | ~lockLayers ~nodePick ~shapes ~layerWin | ~revert refresh" />
    </div>
    <ul className="flex-1 bg-white text-[#111]">
      <li className="flex h-[23px] items-center gap-[7px]"><Icon name="layers" className="-ml-px" />Vizex</li>
    </ul>
  </section>
);

const eastings = [
  { label: '-1000mE', line: 'left-[23.8%]' },
  { label: '0mE', line: 'left-[50%]' },
  { label: '1000mE', line: 'left-[76.2%]' },
];

const northing = 'absolute leading-[14px] text-[#00008b]';
const easting = 'absolute right-[6px] rotate-180 leading-[14px] text-[#00008b] [writing-mode:vertical-rl]';

const PlotView = () => (
  <div className="relative flex-1 overflow-hidden border-x border-t-[3px] border-b-[3px] border-[#fde8a4] bg-white font-['Liberation_Sans',sans-serif] text-[13px]">
    <div className="absolute inset-x-0 top-0 h-px bg-[repeating-linear-gradient(90deg,#c4c4c4_0_1px,transparent_1px_4px)]" />
    <div className="absolute inset-x-0 bottom-0 h-px bg-[repeating-linear-gradient(90deg,#c4c4c4_0_1px,transparent_1px_4px)]" />
    <div className="absolute inset-x-0 top-1/2 h-px bg-[repeating-linear-gradient(90deg,#b4b4b4_0_1px,transparent_1px_4px)]" />
    {eastings.map(({ label, line }) => (
      <div key={label} className={clsx('absolute inset-y-0 w-[2px] -translate-x-px bg-[repeating-linear-gradient(180deg,#c4c4c4_0_1px,transparent_1px_4px)]', line)}>
        <span className={clsx(easting, 'top-[5px]')}>{label}</span>
        <span className={clsx(easting, 'bottom-[6px]')}>{label}</span>
      </div>
    ))}
    <span className={clsx(northing, 'bottom-1/2 left-1 mb-1')}>0mN</span>
    <span className={clsx(northing, 'right-[6px] bottom-1/2 mb-1')}>0mN</span>
    <span className={clsx(northing, 'bottom-1 left-1')}>-1000mN</span>
    <span className={clsx(northing, 'right-[6px] bottom-1')}>-1000mN</span>
    <div className="absolute right-[47px] bottom-[20px] w-[26.2%] text-[#111]">
      <div className="h-[11px] border-x border-t border-[#111]" />
      <div className="-mr-5 -ml-1 flex justify-between leading-[16px]"><span>0</span><span>1000m</span></div>
    </div>
  </div>
);

const DocumentArea = () => (
  <main className="relative flex min-w-0 flex-1 flex-col">
    <div className={clsx('flex h-[26px] shrink-0 items-center', dots)}>
      <div className="flex h-full w-20 items-center rounded-t-sm bg-linear-to-b from-white from-25% via-[#fff5d0] via-25% to-[#fde8a4] to-55% pl-[5px] text-[#111]">
        <Icon name="layers" />
        <span className="flex-1 pt-px pl-[3px]">Vizex</span>
        <button aria-label="Close tab" className="pr-[5px]"><svg viewBox="0 0 9 9" className="h-[9px] w-[9px]"><P d="M1 1L8 8M8 1L1 8" c="#6b5a35" w={1.4} /></svg></button>
      </div>
      <button aria-label="New window" className="ml-1"><Icon name="newWindow" /></button>
      <div className="ml-auto flex items-center gap-[5px] pr-[3px] text-[#d0d3d8]">
        <button aria-label="Window list"><DropArrow className="h-1 w-2" /></button>
        <button aria-label="Close window"><svg viewBox="0 0 9 9" className="h-[9px] w-[9px]"><P d="M1 1L8 8M8 1L1 8" c="#d0d3d8" w={1.8} /></svg></button>
      </div>
    </div>
    <PlotView />
    <svg viewBox="0 0 12 19" className="absolute right-[204px] -bottom-[5px] h-[19px] w-3" aria-hidden="true">
      <path d="M0.5 0.5V16L4 12.5L6.5 18L9 17L6.7 11.7H11.5Z" fill="#fff" stroke="#15181c" />
    </svg>
  </main>
);

const App = () => (
  <div className="flex h-screen flex-col overflow-hidden bg-[#0d1114] font-['Open_Sans','Noto_Sans',sans-serif] text-[14px] leading-[20px]">
    <svg className="absolute h-0 w-0" aria-hidden="true">
      <defs>
        <linearGradient id="folderFill" x1="0" y1="0" x2="1" y2="1">
          <stop offset="0" stopColor="#fff0b8" />
          <stop offset="0.55" stopColor="#f3cd6c" />
          <stop offset="1" stopColor="#d8942a" />
        </linearGradient>
      </defs>
    </svg>
    <div className="flex min-h-0 flex-1">
      <div className="flex min-w-0 flex-1 flex-col bg-[#2b3c59]">
        <MenuBar />
        <Toolbars />
        <div className="flex min-h-0 flex-1 gap-[5px] pt-[6px] pr-[7px]">
          <aside className="flex w-[383px] shrink-0 flex-col gap-[6px]">
            <FormsPanel />
            <DisplayPanel />
          </aside>
          <DocumentArea />
        </div>
        <footer className="flex h-[31px] shrink-0 items-center justify-end pt-[9px] pb-px text-[#eef1f6]">
          <span className="h-[21px] w-28 border-l border-[#c3c9d4] pt-px pl-[6px] whitespace-nowrap">(1367, -972, 0)</span>
          <span className="h-[21px] w-[61px] border-l border-[#c3c9d4] pt-px pl-[6px] whitespace-nowrap">VE - off</span>
        </footer>
      </div>
      <div className="flex w-[9px] flex-col">
        <div className="flex-[818_1_0%] bg-linear-to-b from-[#35619c] to-[#4f73ae] to-20%" />
        <div className="flex-[171_1_0%] bg-[#0d1114]" />
      </div>
    </div>
    <div className="flex h-[10px] shrink-0 overflow-hidden bg-[#0d1114] text-white">
      <div className="w-[41.5%] bg-[#1c2326]" />
      <div className="w-[61px] bg-[#4b4b4b]" />
      <div className="w-[15%] bg-[#1c2326]" />
      <div className="flex-1 bg-linear-to-r from-[#0f1315] to-[#24180c] to-40%" />
      <div className="flex w-[345px] justify-end pr-[91px]"><span className="pt-[3px]">7:46 PM</span></div>
    </div>
  </div>
);

export default App;
